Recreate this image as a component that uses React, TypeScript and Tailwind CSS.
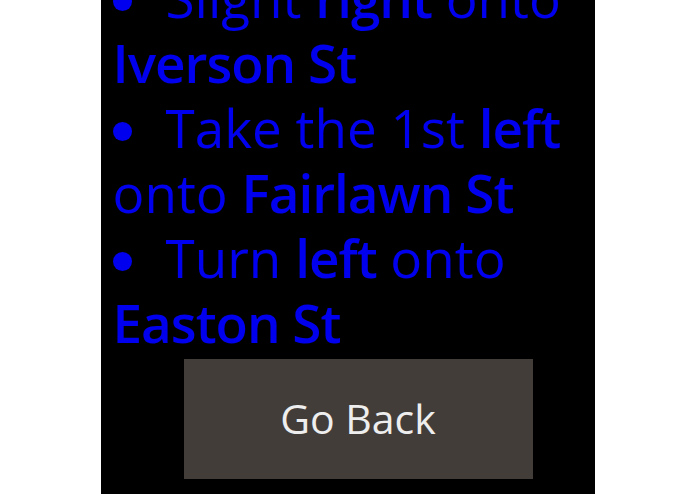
const steps: { pre: string; turn: string; mid: string; street: string }[] = [
  { pre: "Slight ", turn: "right", mid: " onto ", street: "Iverson St" },
  { pre: "Take the 1st ", turn: "left", mid: " onto ", street: "Fairlawn St" },
  { pre: "Turn ", turn: "left", mid: " onto ", street: "Easton St" },
];

export default function App() {
  return (
    <div className="h-[494px] overflow-hidden bg-white">
      <div className="mx-auto h-full w-[494px] overflow-hidden bg-black px-[12px] font-['Open_Sans',sans-serif]">
        <div className="-mt-[35px] text-[53px] leading-[65px] text-[#0000ee]">
          {steps.map((s) => (
            <p key={s.street}>
              <span className="mr-[34px] inline-block h-[19px] w-[19px] rounded-full bg-[#0000ee] align-[7px]" />
              {s.pre}
              <b className="font-semibold tracking-[-1px]">{s.turn}</b>
              {s.mid}
              <b className="font-semibold tracking-[-1px]">{s.street}</b>
            </p>
          ))}
        </div>
        <div className="mt-[4px] flex justify-center pl-[21px]">
          <button className="h-[120px] w-[349px] bg-[#433d3a] text-[41px] text-[#eeeeee] shadow-[0_1px_2px_rgba(0,0,0,0.5)]">
            Go Back
          </button>
        </div>
      </div>
    </div>
  );
}
